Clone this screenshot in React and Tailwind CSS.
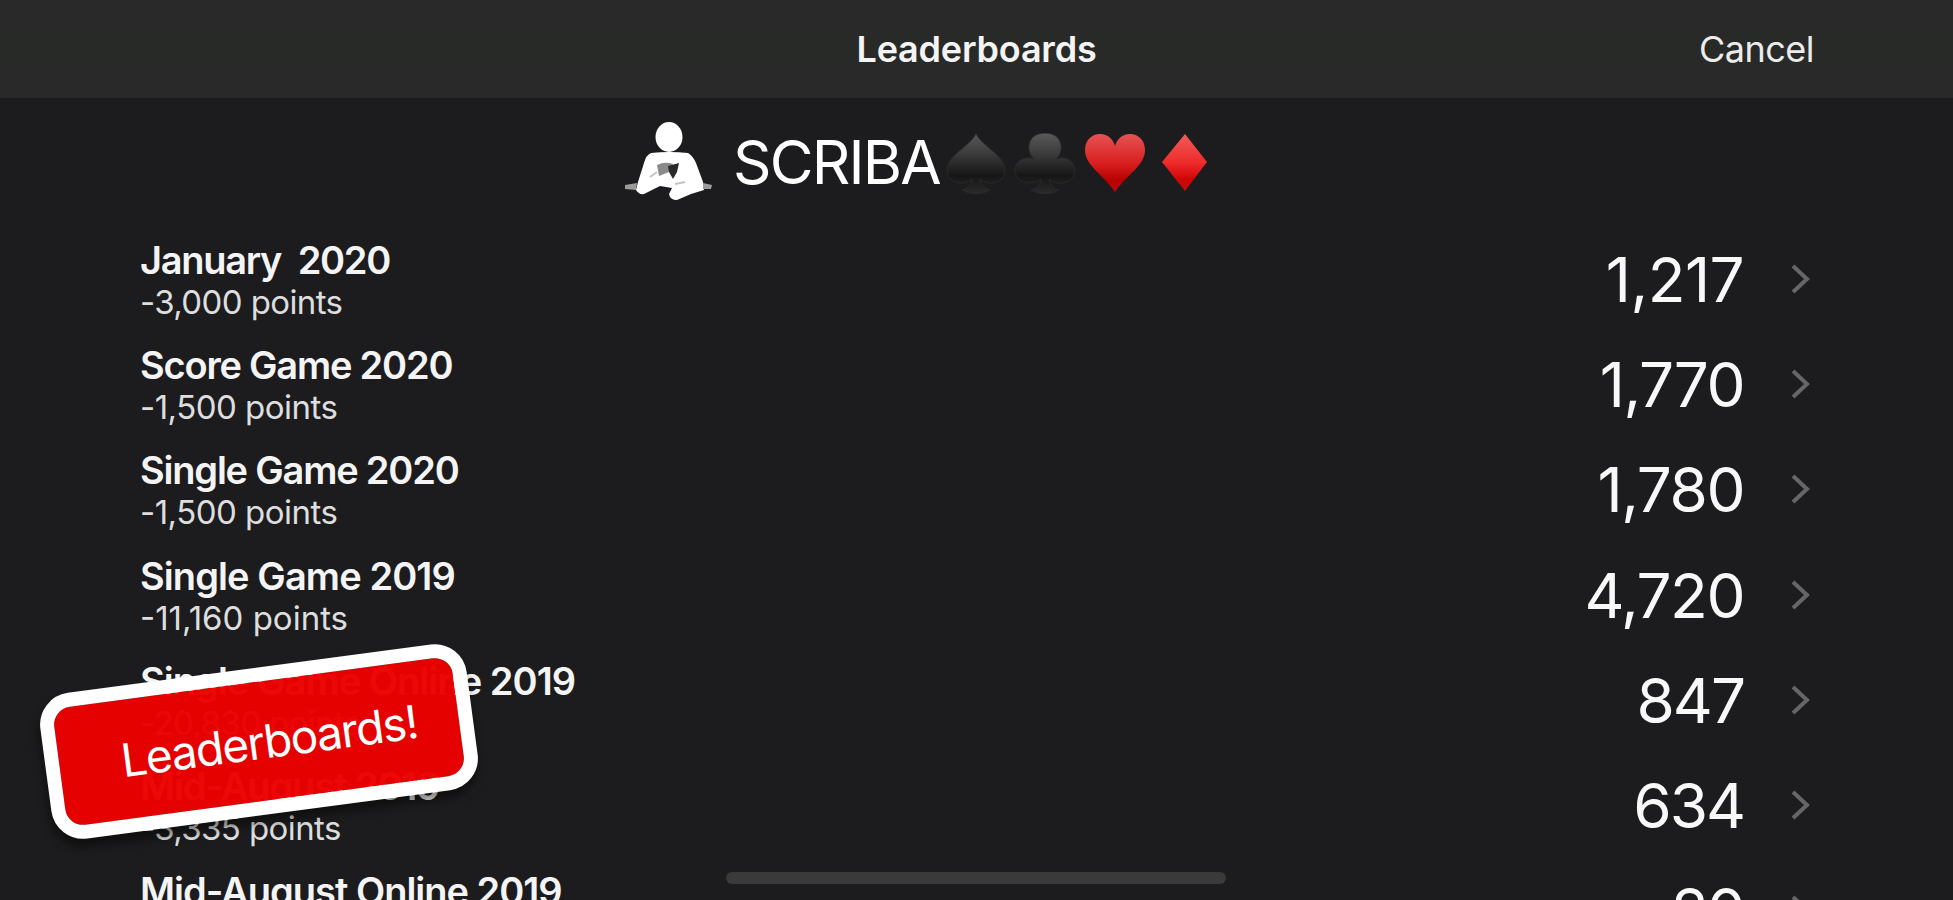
import React from "react";

const boards = [
  { name: "January  2020", points: "-3,000 points", rank: "1,217", nameCls: "tracking-[-1.3px]", pointsCls: "tracking-[-0.6px]", rankCls: "tracking-[-0.6px]" },
  { name: "Score Game 2020", points: "-1,500 points", rank: "1,770", nameCls: "tracking-[-1.2px]", pointsCls: "tracking-[-0.5px]", rankCls: "tracking-[-1.5px]" },
  { name: "Single Game 2020", points: "-1,500 points", rank: "1,780", nameCls: "tracking-[-1.2px]", pointsCls: "tracking-[-0.5px]", rankCls: "tracking-[-1.5px]" },
  { name: "Single Game 2019", points: "-11,160 points", rank: "4,720", nameCls: "tracking-[-0.9px]", pointsCls: "tracking-[0px]", rankCls: "tracking-[-1.5px]" },
  { name: "Single Game Online 2019", points: "-20,830 points", rank: "847", nameCls: "tracking-[-0.95px]", pointsCls: "tracking-[-0.6px]", rankCls: "tracking-[-2px]" },
  { name: "Mid-August 2019", points: "-3,335 points", rank: "634", nameCls: "tracking-[-1.1px]", pointsCls: "tracking-[-0.6px]", rankCls: "tracking-[-2px]" },
  { name: "Mid-August Online 2019", points: "-1,500 points", rank: "20", nameCls: "tracking-[-1px]", pointsCls: "tracking-[-0.6px]", rankCls: "tracking-[-2px]" },
];

const Scribe = () => (
  <svg className="w-[92px] h-[82px]" viewBox="0 0 92 82">
    <ellipse cx="46" cy="17" rx="13.5" ry="15" fill="#fff" />
    <path
      d="M28 33 Q46 31 65 33 Q70 36 73 43 L80 62 L81 70 L68 74 L54 80 Q47 80 46 74 L49 68 L37 66 L21 74 Q16 75 13 70 L15 62 L21 43 Q23 35 28 33 Z"
      fill="#fff"
    />
    <path d="M2 65 L14 63 L13 70 L2 69 Z M80 63 L89 65 L88 69 L80 69 Z" fill="#9b9b9b" />
    {/* cards in hand */}
    <path d="M34 45 Q42 41 50 44 L46 52 L36 56 Z" fill="#8a8a8a" />
    <path d="M45 46 L56 43 L54 52 L50 59 L46 52 Z" fill="#29292b" />
    <path d="M27 57 L34 52 M52 64 L62 62" stroke="#c4c4c4" strokeWidth="2" />
  </svg>
);

const Suits = () => (
  <svg className="w-[264px] h-[62px]" viewBox="0 0 264 62">
    <defs>
      <linearGradient id="black" x1="0" y1="0" x2="0" y2="1">
        <stop offset="0" stopColor="#5a5a5a" />
        <stop offset="0.35" stopColor="#3a3a3a" />
        <stop offset="0.7" stopColor="#161617" />
        <stop offset="1" stopColor="#2b2b2c" />
      </linearGradient>
      <linearGradient id="red" x1="0" y1="0" x2="0" y2="1">
        <stop offset="0" stopColor="#e65353" />
        <stop offset="0.5" stopColor="#d91f1f" />
        <stop offset="0.8" stopColor="#b90000" />
        <stop offset="1" stopColor="#b80c0c" />
      </linearGradient>
      <linearGradient id="bright" x1="0" y1="0" x2="0" y2="1">
        <stop offset="0" stopColor="#f05c5c" />
        <stop offset="0.5" stopColor="#ef2b2b" />
        <stop offset="0.8" stopColor="#cf0505" />
        <stop offset="1" stopColor="#bd1010" />
      </linearGradient>
    </defs>
    <path
      d="M30 0 C34 12 59 22 59 37 C59 50 43 54 34 46 Q35 55 44 57 Q37 61 30 61 Q23 61 16 57 Q25 55 26 46 C17 54 1 50 1 37 C1 22 26 12 30 0 Z"
      fill="url(#black)"
      stroke="#29292a"
    />
    <path
      d="M99 0 C117 0 119 18 110 26 C121 22 130 30 129 38 C128 50 112 54 103 46 Q104 55 113 57 Q106 61 99 61 Q92 61 85 57 Q94 55 95 46 C86 54 70 50 69 38 C68 30 77 22 88 26 C79 18 81 0 99 0 Z"
      fill="url(#black)"
      stroke="#29292a"
    />
    <path
      d="M169 59 C158 42 139 33 139 17 C139 7 146 1 154 1 C162 1 167 6 169 13 C171 6 176 1 184 1 C192 1 199 7 199 17 C199 33 180 42 169 59 Z"
      fill="url(#red)"
    />
    <path d="M239 1 L261 29 L239 58 L216 29 Z" fill="url(#bright)" />
  </svg>
);

const Row = ({ board }) => (
  <div className="h-[105.2px] flex items-start justify-between">
    <div>
      <p className={`h-[41px] leading-[41px] text-[38px] font-semibold whitespace-pre text-[#f4f4f4] ${board.nameCls}`}>
        {board.name}
      </p>
      <p className={`h-[41px] leading-[42px] text-[33px] whitespace-pre text-[#dedede] ${board.pointsCls}`}>
        {board.points}
      </p>
    </div>
    <div className="flex items-center h-[78px]">
      <span className={`text-[62px] leading-[78px] pt-[2px] text-[#f8f8f8] ${board.rankCls}`}>{board.rank}</span>
      <svg className="w-[20px] h-[30px] ml-[47px]" viewBox="0 0 20 30">
        <path d="M2 2 L16 15 L2 28" fill="none" stroke="#666668" strokeWidth="4" />
      </svg>
    </div>
  </div>
);

const App = () => {
  return (
    <div className="relative w-[1953px] h-[900px] overflow-hidden bg-[#1c1c1e] text-white font-['Inter',sans-serif]">
      {/* nav bar */}
      <header className="h-[98px] grid grid-cols-3 items-center bg-linear-to-b from-[#282828] via-[#282a28] to-[#292929]">
        <span></span>
        <h1 className="text-center text-[36px] font-semibold tracking-[-0.2px] text-[#f4f4f4]">Leaderboards</h1>
        <button className="justify-self-end mr-[139px] text-[36px] tracking-[-0.5px] text-[#ececec]">Cancel</button>
      </header>

      {/* player */}
      <div className="flex items-start pl-[623px] pt-[22px] h-[142px]">
        <Scribe />
        <span className="ml-[18px] mt-[3px] w-[213px] text-[60px] leading-[78px] tracking-[-1.8px]">SCRIBA</span>
        <div className="mt-[13px]">
          <Suits />
        </div>
      </div>

      <div className="pl-[140px] pr-[142px]">
        {boards.map((board) => (
          <Row key={board.name} board={board} />
        ))}
      </div>

      {/* sticker */}
      <div className="absolute left-[44px] top-[668px] w-[430px] h-[147px] rounded-[32px] border-[14px] border-white bg-[#ec0000]/97 bg-clip-padding shadow-[-2px_8px_10px_rgba(0,0,0,0.45)] flex items-center justify-center -rotate-[7.6deg]">
        <span className="ml-[20px] mt-[2px] text-[46px] tracking-[-1.4px]">Leaderboards!</span>
      </div>

      {/* home indicator */}
      <div className="absolute left-[726px] top-[872px] w-[500px] h-[12px] rounded-full bg-[#3a3a3b]"></div>
    </div>
  );
};

export default App;
